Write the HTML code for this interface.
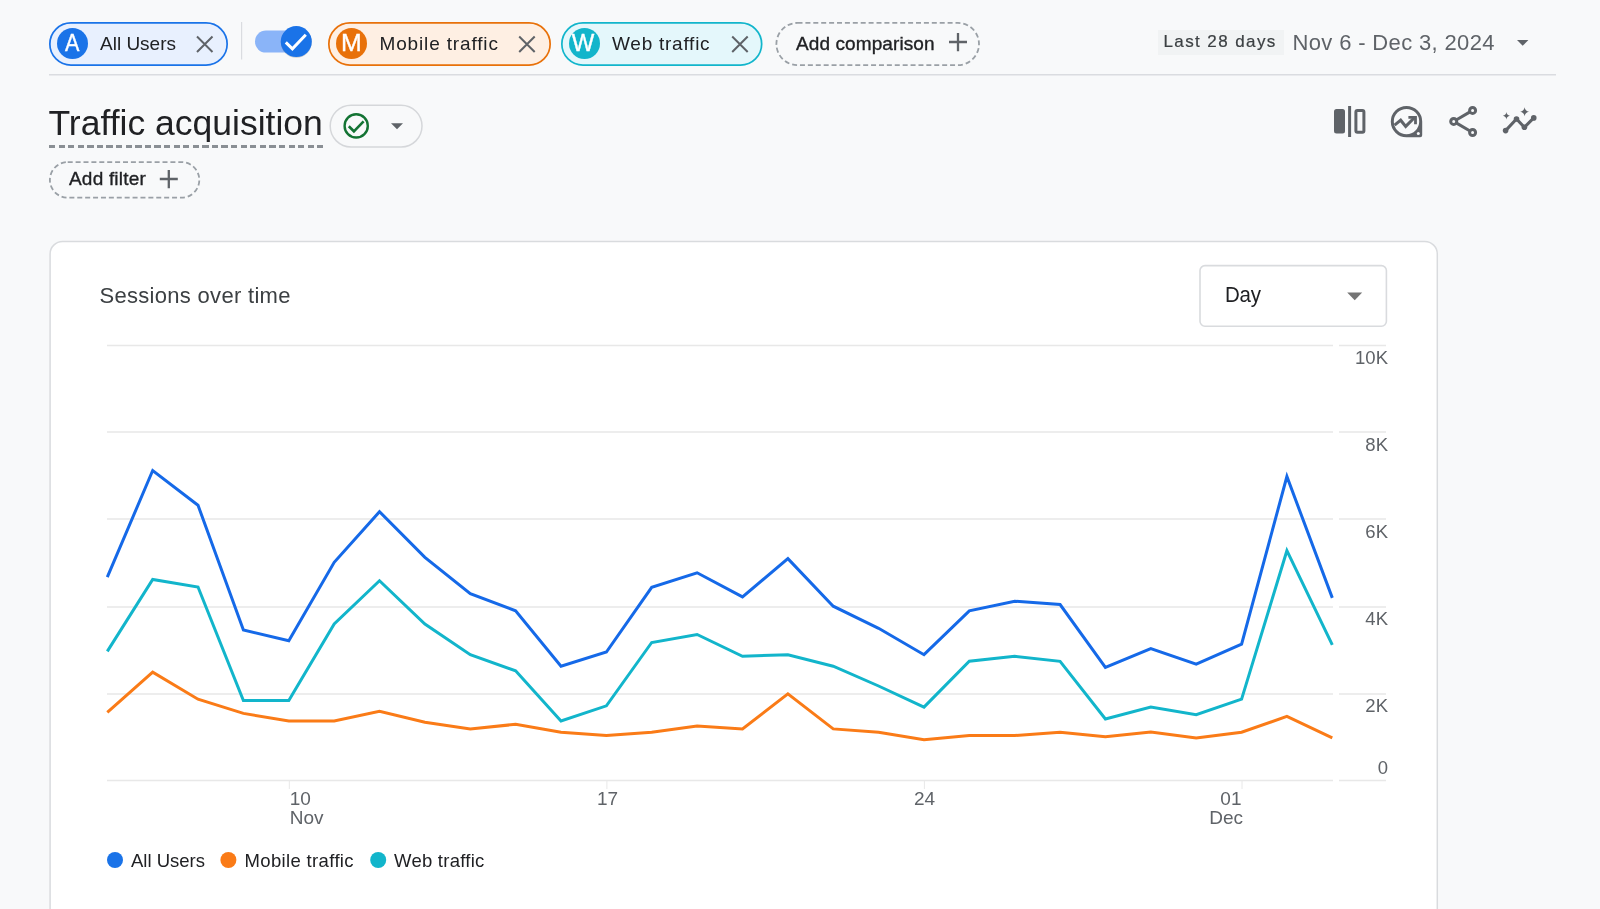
<!DOCTYPE html>
<html>
<head>
<meta charset="utf-8">
<style>
html,body{margin:0;padding:0;width:1600px;height:909px;overflow:hidden;background:#f8f9fa;font-family:"Liberation Sans",sans-serif;}
.a{position:absolute;}
.t{position:absolute;line-height:0;white-space:nowrap;}
.chip{position:absolute;box-sizing:border-box;height:44px;top:22px;border-radius:22px;}
.m{-webkit-text-stroke:0.35px currentColor;}
.av{position:absolute;width:31px;height:31px;border-radius:50%;top:28.4px;color:#fff;}
svg{position:absolute;left:0;top:0;overflow:visible;}
</style>
</head>
<body><div style="position:absolute;left:0;top:0;width:1600px;height:909px;will-change:transform;">
<!-- ===== Top comparison bar ===== -->
<div class="chip" style="left:49px;width:179px;border-color:#1a73e8;background:#e8f0fe;"></div>
<div class="av" style="left:57px;background:#1a73e8;"></div>
<div class="t" style="left:100px;top:43.6px;font-size:19px;color:#202124;">All Users</div>


<div class="chip" style="left:328px;width:223px;border-color:#e8710a;background:#feefe3;"></div>
<div class="av" style="left:335.5px;background:#e8710a;"></div>
<div class="t" style="left:379.5px;top:43.6px;font-size:19px;letter-spacing:0.85px;color:#202124;">Mobile traffic</div>

<div class="chip" style="left:561px;width:202px;border-color:#12b5cb;background:#e4f7fb;"></div>
<div class="av" style="left:569px;background:#12b5cb;"></div>
<div class="t" style="left:612px;top:43.6px;font-size:19px;letter-spacing:0.75px;color:#202124;">Web traffic</div>

<div class="t m" style="left:796px;top:43.6px;font-size:19px;letter-spacing:0.1px;color:#202124;">Add comparison</div>

<div class="a" style="left:1157.5px;top:30px;width:126px;height:25px;background:#f1f3f4;"></div>
<div class="t m" style="left:1163.5px;top:42.2px;font-size:17px;letter-spacing:1.4px;color:#3c4043;-webkit-text-stroke:0.2px #3c4043;">Last 28 days</div>
<div class="t" style="left:1292.5px;top:42.5px;font-size:22px;letter-spacing:0.35px;color:#5f6368;">Nov 6 - Dec 3, 2024</div>


<!-- ===== Title row ===== -->
<div class="t" style="left:48.5px;top:122.6px;font-size:35.5px;color:#202124;">Traffic acquisition</div>
<div class="a" style="left:48.6px;top:145px;width:274.5px;height:3.2px;background:repeating-linear-gradient(90deg,#8a8f94 0 6.3px,transparent 6.3px 9.58px);"></div>

<div class="t m" style="left:69px;top:179px;font-size:19px;letter-spacing:0.2px;color:#202124;">Add filter</div>

<!-- ===== Card ===== -->
<div class="a" style="left:49.5px;top:240.8px;width:1388.5px;height:720px;background:#fff;border-radius:13px;"></div>
<div class="t" style="left:99.5px;top:295.8px;font-size:22px;letter-spacing:0.3px;color:#3c4043;">Sessions over time</div>
<div class="t" style="left:1224.5px;top:295px;font-size:22.5px;letter-spacing:-0.2px;transform:scaleX(0.91);transform-origin:0 0;color:#202124;">Day</div>

<svg width="1600" height="909" viewBox="0 0 1600 909">
  <path d="M49 74.75H1556" stroke="#dadce0" stroke-width="1.4"/>
  <path d="M241.6 22V59.5" stroke="#dadce0" stroke-width="1.2"/>
  <!-- card + dropdown borders -->
  <rect x="50.1" y="241.45" width="1387.2" height="720" rx="12.5" fill="none" stroke="#d9dbde" stroke-width="1.5"/>
  <rect x="1200" y="265.6" width="186.4" height="60.6" rx="5" fill="none" stroke="#d9dbde" stroke-width="1.6"/>
  <!-- chip borders -->
  <rect x="49.85" y="22.85" width="177.3" height="42.3" rx="21.15" fill="none" stroke="#1a73e8" stroke-width="1.7"/>
  <rect x="328.85" y="22.85" width="221.3" height="42.3" rx="21.15" fill="none" stroke="#e8710a" stroke-width="1.7"/>
  <rect x="561.85" y="22.85" width="199.8" height="42.3" rx="21.15" fill="none" stroke="#12b5cb" stroke-width="1.7"/>
  <!-- dashed buttons -->
  <rect x="776.4" y="22.9" width="202.6" height="42.2" rx="21.1" fill="none" stroke="#9aa0a6" stroke-width="1.8" stroke-dasharray="5 2.9"/>
  <rect x="49.9" y="162.1" width="149.4" height="35.6" rx="17.8" fill="none" stroke="#9aa0a6" stroke-width="1.8" stroke-dasharray="5 2.9"/>
  <!-- chip icons -->
  <g stroke="#5f6368" stroke-width="2" stroke-linecap="butt" fill="none">
    <path d="M197 36.5L212.5 52M212.5 36.5L197 52"/>
    <path d="M519.2 36.5L534.7 52M534.7 36.5L519.2 52"/>
    <path d="M732.2 36.5L747.7 52M747.7 36.5L732.2 52"/>
    <path d="M958 33v18.2M949 42h18" stroke-width="2.3"/>
    <path d="M168.8 170v18.2M159.8 179h18" stroke-width="2.3"/>
  </g>
  <!-- toggle -->
  <rect x="255" y="30.6" width="50" height="22" rx="11" fill="#8ab4f8"/>
  <circle cx="296.3" cy="42.3" r="15.5" fill="rgba(0,0,0,0.18)"/>
  <circle cx="296.3" cy="41.6" r="15.5" fill="#1a73e8"/>
  <path d="M285.8 42.4L292.4 48.8L305.8 34.8" stroke="#fff" stroke-width="3" fill="none"/>
  <!-- avatar letters M W -->
  <text x="72.2" y="51" font-family="Liberation Sans" font-size="23" fill="#fff" stroke="#fff" stroke-width="0.35" text-anchor="middle" transform="translate(72.2 0) scale(0.94 1) translate(-72.2 0)">A</text>
  <text x="351.3" y="51" font-family="Liberation Sans" font-size="23" fill="#fff" stroke="#fff" stroke-width="0.35" text-anchor="middle" transform="translate(351.3 0) scale(1.08 1) translate(-351.3 0)">M</text>
  <text x="583.1" y="51" font-family="Liberation Sans" font-size="23" fill="#fff" stroke="#fff" stroke-width="0.35" text-anchor="middle" transform="translate(583.1 0) scale(1.04 1) translate(-583.1 0)">W</text>
  <!-- date dropdown triangle -->
  <path d="M1517 40h11.4l-5.7 5.7z" fill="#5f6368"/>
  <!-- status pill -->
  <circle cx="356.2" cy="125.9" r="11.6" stroke="#137333" stroke-width="2.4" fill="none"/>
  <path d="M348.8 126.3L353.9 131.3L363.6 121.4" stroke="#137333" stroke-width="2.6" fill="none"/>
  <rect x="330.2" y="105.2" width="91.8" height="41.8" rx="20.9" fill="none" stroke="#d5d7da" stroke-width="1.5"/>
  <path d="M391 123.3h12l-6 6z" fill="#5f6368"/>
  <!-- right icons -->
  <g fill="#5f6368">
    <rect x="1334" y="109" width="11" height="24.6" rx="2.5"/>
    <rect x="1348.1" y="106" width="3" height="31"/>
    <rect x="1355.9" y="110.5" width="8" height="21.8" rx="1.5" fill="none" stroke="#5f6368" stroke-width="3"/>
  </g>
  <path fill="#5f6368" fill-rule="evenodd" d="M1422.2 121.6A15.7 15.7 0 1 0 1406.5 137.3H1420.2A2 2 0 0 0 1422.2 135.3Z M1419.2 121.6A12.7 12.7 0 1 0 1406.5 134.3A12.7 12.7 0 0 0 1419.2 121.6Z"/>
  <g stroke="#5f6368" stroke-width="3" fill="none">
    <path d="M1394.6 125.2l6.1-5l5 6.2l8.9-8.9"/>
    <path d="M1408.4 117.3h7.1v7" stroke-width="2.8"/>
  </g>
  <circle cx="1418.3" cy="133.4" r="1.5" fill="#f8f9fa"/>
  <g stroke="#5f6368" stroke-width="3" fill="none">
    <path d="M1456.6 119.7l13 -7.6M1456.6 123.1l13 7.7"/>
    <circle cx="1472.6" cy="110.4" r="3"/>
    <circle cx="1453.7" cy="121.4" r="3"/>
    <circle cx="1472.6" cy="132.5" r="3"/>
  </g>
  <g fill="#5f6368">
    <path d="M1505.6 130.6L1516.5 119L1524.4 127.3L1533.75 117.9" stroke="#5f6368" stroke-width="3" fill="none"/>
    <circle cx="1505.6" cy="130.6" r="2.8"/>
    <circle cx="1516.5" cy="119" r="2.8"/>
    <circle cx="1524.4" cy="127.3" r="2.8"/>
    <circle cx="1533.75" cy="117.9" r="2.8"/>
    <path d="M1524.6 107.2Q1525.2 111.1 1529 111.7Q1525.2 112.3 1524.6 116.2Q1524 112.3 1520.2 111.7Q1524 111.1 1524.6 107.2z"/>
    <path d="M1506.4 112.1Q1506.8 115.4 1509.9 115.8Q1506.8 116.2 1506.4 119.5Q1506 116.2 1502.9 115.8Q1506 115.4 1506.4 112.1z"/>
  </g>
  <!-- Day dropdown triangle -->
  <path d="M1347.2 292.4h15l-7.5 7.9z" fill="#757575"/>

  <!-- ===== Chart ===== -->
  <g stroke="#e8e8e8" stroke-width="1">
    <path d="M107 345.6H1333M107 432H1333M107 518.9H1333M107 607H1333M107 693.9H1333M107 780.4H1333" stroke-width="1.5"/>
    <path d="M1339 345.6H1386M1339 432H1386M1339 518.9H1386M1339 607H1386M1339 693.9H1386M1339 780.4H1386" stroke-width="1.5"/>
    <path d="M289.3 780v9M606.9 780v9M924.4 780v9M1242 780v9"/>
  </g>
  <g font-family="Liberation Sans" font-size="18.5" fill="#5f6368" text-anchor="end">
    <text x="1388" y="364.3">10K</text>
    <text x="1388" y="451">8K</text>
    <text x="1388" y="538">6K</text>
    <text x="1388" y="625">4K</text>
    <text x="1388" y="712.3">2K</text>
    <text x="1388" y="773.7">0</text>
  </g>
  <g font-family="Liberation Sans" font-size="19" fill="#5f6368">
    <text x="289.8" y="804.7">10</text>
    <text x="289.8" y="823.5">Nov</text>
    <text x="607.5" y="804.7" text-anchor="middle">17</text>
    <text x="924.6" y="804.7" text-anchor="middle">24</text>
    <text x="1241.5" y="804.7" text-anchor="end">01</text>
    <text x="1243" y="823.5" text-anchor="end">Dec</text>
  </g>
  <g fill="none" stroke-width="3" stroke-linejoin="miter" stroke-linecap="butt">
    <polyline stroke="#fa7b17" points="107.3,712.4 152.7,672.2 198.0,699.2 243.4,713.4 288.8,721.0 334.2,721.0 379.5,711.4 424.9,722.3 470.3,728.9 515.6,724.3 561.0,732.2 606.4,735.5 651.7,732.2 697.1,726.0 742.5,728.9 787.9,693.9 833.2,728.9 878.6,732.2 924.0,739.8 969.3,735.5 1014.7,735.5 1060.1,732.2 1105.4,736.8 1150.8,731.9 1196.2,738.0 1241.6,732.2 1286.9,716.4 1332.3,737.8"/>
    <polyline stroke="#12b5cb" points="107.3,651.4 152.7,579.4 198.0,587.0 243.4,700.5 288.8,700.5 334.2,624.0 379.5,580.7 424.9,624.0 470.3,654.7 515.6,670.8 561.0,721.0 606.4,705.8 651.7,642.5 697.1,634.5 742.5,656.3 787.9,654.7 833.2,666.2 878.6,686.0 924.0,707.1 969.3,661.3 1014.7,656.3 1060.1,661.3 1105.4,719.0 1150.8,707.1 1196.2,714.7 1241.6,699.2 1286.9,550.7 1332.3,644.8"/>
    <polyline stroke="#1569e8" points="107.3,577.1 152.7,470.5 198.0,505.2 243.4,629.9 288.8,640.8 334.2,562.3 379.5,511.8 424.9,557.3 470.3,593.6 515.6,610.8 561.0,666.2 606.4,652.0 651.7,587.3 697.1,572.8 742.5,596.9 787.9,558.6 833.2,606.2 878.6,628.3 924.0,654.7 969.3,610.8 1014.7,601.2 1060.1,604.5 1105.4,667.5 1150.8,648.7 1196.2,664.2 1241.6,644.1 1286.9,476.5 1332.3,597.9"/>
  </g>
  <!-- legend -->
  <circle cx="115" cy="860" r="8" fill="#1a73e8"/>
  <circle cx="228.4" cy="860" r="8" fill="#fa7b17"/>
  <circle cx="378.2" cy="860" r="8" fill="#12b5cb"/>
  <g font-family="Liberation Sans" font-size="18.5" fill="#202124">
    <text x="131" y="866.5">All Users</text>
    <text x="244.5" y="866.5" letter-spacing="0.35">Mobile traffic</text>
    <text x="394" y="866.5" letter-spacing="0.25">Web traffic</text>
  </g>
</svg>
</div></body>
</html>
